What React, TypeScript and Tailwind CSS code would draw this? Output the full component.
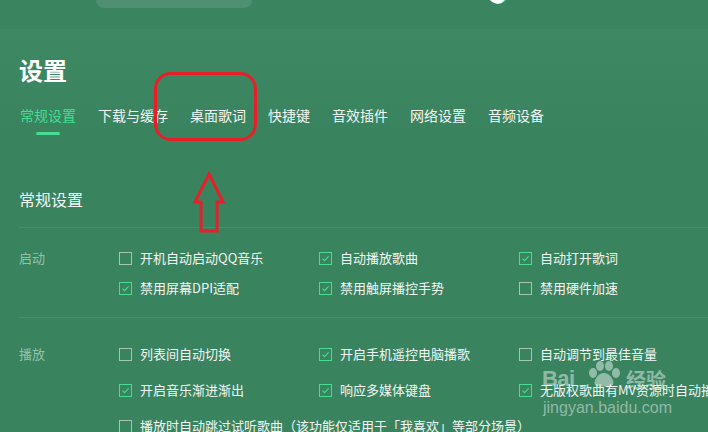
import React from 'react';

type Item = { label: string; checked: boolean; span?: boolean };

const tabs = ['常规设置', '下载与缓存', '桌面歌词', '快捷键', '音效插件', '网络设置', '音频设备'];

const groups: { title: string; pt: string; gap: string; items: Item[] }[] = [
  {
    title: '启动',
    pt: 'pt-[20px]',
    gap: 'gap-y-[10px]',
    items: [
      { label: '开机自动启动QQ音乐', checked: false },
      { label: '自动播放歌曲', checked: true },
      { label: '自动打开歌词', checked: true },
      { label: '禁用屏幕DPI适配', checked: true },
      { label: '禁用触屏播控手势', checked: true },
      { label: '禁用硬件加速', checked: false },
    ],
  },
  {
    title: '播放',
    pt: 'pt-[26px]',
    gap: 'gap-y-[16px]',
    items: [
      { label: '列表间自动切换', checked: false },
      { label: '开启手机遥控电脑播歌', checked: true },
      { label: '自动调节到最佳音量', checked: false },
      { label: '开启音乐渐进渐出', checked: true },
      { label: '响应多媒体键盘', checked: true },
      { label: '无版权歌曲有MV资源时自动播放MV', checked: true },
      { label: '播放时自动跳过试听歌曲（该功能仅适用于「我喜欢」等部分场景）', checked: false, span: true },
    ],
  },
];

function CheckBox({ checked }: { checked: boolean }) {
  return (
    <span
      className={
        checked
          ? 'flex items-center justify-center w-[13px] h-[13px] shrink-0 border border-[#45dc93]'
          : 'flex items-center justify-center w-[13px] h-[13px] shrink-0 border border-[#a3c5b2]'
      }
    >
      {checked && (
        <svg width="9" height="9" viewBox="0 0 9 9" fill="none">
          <path d="M1.5 4.6 L3.6 6.6 L7.6 2.4" stroke="#45dc93" strokeWidth="1.1" />
        </svg>
      )}
    </span>
  );
}

export default function App() {
  return (
    <div
      className="relative w-[708px] h-[432px] overflow-hidden bg-[#39835f] text-white"
      style={{ fontFamily: '"Microsoft YaHei", "Noto Sans CJK SC", "Noto Sans", sans-serif' }}
    >
      {/* top bar */}
      <div className="relative h-[29px] bg-[#3a8460]">
        <div className="ml-[96px] w-[156px] h-[8px] rounded-b-[10px] bg-[#4e9070]" />
        <div className="absolute left-[488px] top-[-16px] w-[20px] h-[20px] rounded-full bg-white border-r-2 border-[#3ee08f]" />
      </div>

      {/* header */}
      <div className="bg-gradient-to-b from-[#3f8864] to-[#39835f] px-[19px] pt-[25px]">
        <h1 className="text-[24px] leading-[32px] font-bold">设置</h1>
        <div className="flex gap-[22px] mt-[19px] pl-[1px]">
          {tabs.map((t, i) => (
            <div key={t} className="flex flex-col items-center">
              <span className={i === 0 ? 'text-[14px] leading-[20px] text-[#45dc93]' : 'text-[14px] leading-[20px] text-[#f2f7f4]'}>
                {t}
              </span>
              <span className={i === 0 ? 'mt-[7px] w-6 h-[3px] rounded-full bg-[#45dc93]' : 'mt-[7px] w-6 h-[3px]'} />
            </div>
          ))}
        </div>
      </div>

      {/* body */}
      <div className="pl-[19px]">
        <h2 className="mt-[52px] text-[16px] leading-[24px] text-[#f2f7f4]">常规设置</h2>
        <div className="mt-[16px] border-t border-[#44906b]" />

        {groups.map((g, gi) => (
          <div key={g.title} className={gi === 0 ? 'pb-[19px] border-b border-[#44906b] ' + g.pt : g.pt}>
            <div className="flex">
              <div className="w-[100px] shrink-0 text-[13px] leading-[20px] text-[#93c1a8]">{g.title}</div>
              <div className={'grid grid-cols-[200px_200px_200px] ' + g.gap}>
                {g.items.map((it) => (
                  <div
                    key={it.label}
                    className={it.span ? 'col-span-3 flex items-center gap-[8px]' : 'flex items-center gap-[8px]'}
                  >
                    <CheckBox checked={it.checked} />
                    <span className="text-[13px] leading-[20px] whitespace-nowrap text-[#f2f7f4]">{it.label}</span>
                  </div>
                ))}
              </div>
            </div>
          </div>
        ))}
      </div>

      {/* red annotation */}
      <div className="absolute left-[154px] top-[72px] w-[103px] h-[69px] rounded-[17px] border-[3px] border-[#e81f28]" />
      <svg className="absolute left-[190px] top-[170px]" width="38" height="64" viewBox="190 170 38 64">
        <polygon
          points="209,174 223,202 217,202 217,231 201,231 201,202 195,202"
          fill="none"
          stroke="#e81f28"
          strokeWidth="3"
          strokeLinejoin="miter"
        />
      </svg>

      {/* watermark */}
      <span
        className="absolute left-[542px] top-[367px] text-[22px] leading-[24px] font-bold tracking-tight text-white/45"
        style={{ fontFamily: '"Liberation Sans", sans-serif' }}
      >
        Bai
      </span>
      <svg width="38" height="26" viewBox="0 0 38 26" className="absolute left-[585px] top-[361px]">
        <g fill="rgba(255,255,255,0.45)">
          <ellipse cx="8" cy="12" rx="4" ry="5" />
          <ellipse cx="15" cy="5" rx="4" ry="5" />
          <ellipse cx="24" cy="5" rx="4" ry="5" />
          <ellipse cx="31" cy="12" rx="4" ry="5" />
          <path d="M19 12 C13 12 8 20 10 24 C12 26 26 26 28 24 C30 20 25 12 19 12 Z" />
        </g>
      </svg>
      <span className="absolute left-[626px] top-[369px] text-[20px] leading-[22px] font-bold text-white/45">经验</span>
      <span
        className="absolute left-[543px] top-[398px] text-[16px] leading-[20px] text-white/45"
        style={{ fontFamily: '"Liberation Sans", sans-serif' }}
      >
        jingyan.baidu.com
      </span>
    </div>
  );
}
